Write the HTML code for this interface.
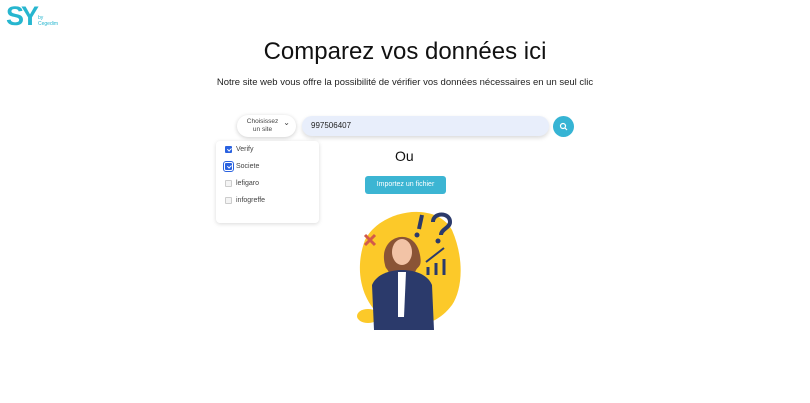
<!DOCTYPE html>
<html><head><meta charset="utf-8"><style>
*{box-sizing:border-box;margin:0;padding:0}
body{width:810px;height:403px;background:#fff;font-family:"Liberation Sans",sans-serif;position:relative;overflow:hidden;color:#111}
.logo{position:absolute;left:6px;top:1px;color:#27b6cf;font-weight:bold;font-size:27px;letter-spacing:-3px}
.logo small{position:absolute;left:32px;top:14px;font-size:5px;letter-spacing:0;line-height:6px;font-weight:normal}
h1{position:absolute;top:38px;width:100%;text-align:center;font-size:24px;font-weight:normal;color:#111}
.sub{position:absolute;top:77px;width:100%;text-align:center;font-size:9.5px;color:#222}
.sel{position:absolute;left:237px;top:115px;width:59px;height:22px;border-radius:11px;background:#fff;box-shadow:0 1px 4px rgba(0,0,0,.2);font-size:6.5px;color:#444;text-align:center;line-height:8px;padding-top:3px;padding-right:8px}
.sel:after{content:"⌄";position:absolute;right:6px;top:4px;font-size:8px}
.inp{position:absolute;left:302px;top:116px;width:247px;height:20px;border-radius:10px;background:#e8eefb;box-shadow:0 2px 4px rgba(0,0,0,.15);font-size:8px;padding:5px 9px;color:#222}
.btn{position:absolute;left:553px;top:116px;width:21px;height:21px;border-radius:50%;background:#36b4d4}
.dd{position:absolute;left:216px;top:141px;width:103px;height:82px;border-radius:4px;background:#fff;box-shadow:0 1px 4px rgba(0,0,0,.15)}
.it{position:absolute;left:9px;font-size:7px;color:#444;display:flex;align-items:center}
.cb{width:7px;height:7px;border:1px solid #ccc;border-radius:1px;margin-right:4px;background:#f4f4f4;position:relative}
.cb.on{background:#2a62e0;border-color:#2a62e0}
.cb.on:after{content:"";position:absolute;left:1.5px;top:0px;width:1.5px;height:3px;border:solid #fff;border-width:0 1px 1px 0;transform:rotate(45deg)}
.ou{position:absolute;left:395px;top:148px;font-size:14px}
.imp{position:absolute;left:365px;top:176px;width:81px;height:18px;border-radius:3px;background:#3cb5d3;color:#fff;font-size:7px;text-align:center;line-height:18px}
</style></head><body>
<div class="logo">SY<small>by<br>Cegedim</small></div>
<h1>Comparez vos données ici</h1>
<div class="sub">Notre site web vous offre la possibilité de vérifier vos données nécessaires en un seul clic</div>
<div class="sel">Choisissez<br>un site</div>
<div class="inp">997506407</div>
<div class="btn"><svg width="21" height="21"><circle cx="10" cy="10" r="2.5" fill="none" stroke="#fff" stroke-width="1.2"/><path d="M12 12l2 2" stroke="#fff" stroke-width="1.2"/></svg></div>
<div class="dd">
<div class="it" style="top:5px"><span class="cb on"></span>Verify</div>
<div class="it" style="top:22px"><span class="cb on" style="outline:1px solid #2a62e0;outline-offset:1px"></span>Societe</div>
<div class="it" style="top:39px"><span class="cb"></span>lefigaro</div>
<div class="it" style="top:56px"><span class="cb"></span>infogreffe</div>
</div>
<div class="ou">Ou</div>
<div class="imp">Importez un fichier</div>
<svg style="position:absolute;left:340px;top:200px" width="130" height="140">
<path d="M25 40C40 10 95 0 112 30C125 60 122 90 112 105C97 125 75 130 50 122C25 110 12 75 25 40Z" fill="#fcc929"/>
<ellipse cx="28" cy="116" rx="11" ry="7" fill="#fcc929"/>
<path d="M25 35l10 10M35 35l-10 10" stroke="#d25a4a" stroke-width="3"/>
<path d="M82 15l-3 14" stroke="#2b3a6b" stroke-width="4"/><circle cx="77" cy="35" r="2.5" fill="#2b3a6b"/>
<path d="M93 22c0-10 17-10 17 0c0 6-9 7-9 13" stroke="#2b3a6b" stroke-width="4" fill="none"/><circle cx="98" cy="41" r="2.5" fill="#2b3a6b"/>
<path d="M88 75v-8M96 75v-12M104 75v-16" stroke="#2b3a6b" stroke-width="3"/>
<path d="M86 62l18-14" stroke="#2b3a6b" stroke-width="2"/>
<path d="M45 65c-8-30 30-40 35-10c3 15-5 10-5 20h-25c-3-8-4-5-5-10Z" fill="#8a5436"/>
<ellipse cx="62" cy="52" rx="10" ry="13" fill="#f2c3a6"/>
<path d="M32 85c5-12 20-15 30-15s25 3 30 15l2 45h-60Z" fill="#2b3a6b"/>
<path d="M58 72h8l-2 45h-6Z" fill="#fff"/>
</svg>
</body></html>
